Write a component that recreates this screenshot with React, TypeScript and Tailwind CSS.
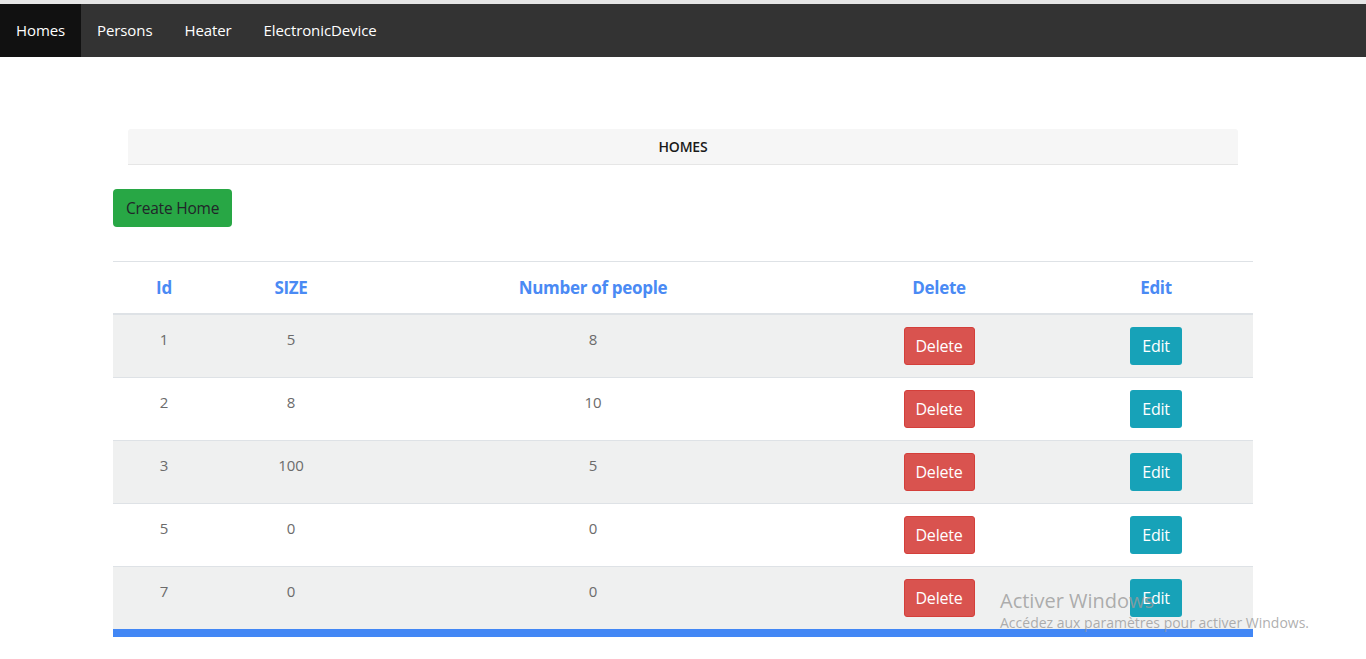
import React from 'react';

const homes = [
  { id: 1, size: 5, people: 8 },
  { id: 2, size: 8, people: 10 },
  { id: 3, size: 100, people: 5 },
  { id: 5, size: 0, people: 0 },
  { id: 7, size: 0, people: 0 },
];

const navItems = ['Homes', 'Persons', 'Heater', 'ElectronicDevice'];

export default function App() {
  return (
    <div className="relative min-h-[659px] bg-white font-['Open_Sans','Noto_Sans',sans-serif] text-[#212529]">
      <div className="h-[4px] bg-[#e6e6e6]" />
      <nav className="flex h-[53px] bg-[#333333]">
        {navItems.map((item, i) => (
          <a
            key={item}
            className={`flex items-center px-4 text-[15px] tracking-[-0.1px] text-white ${i === 0 ? 'bg-[#111111]' : ''}`}
          >
            {item}
          </a>
        ))}
      </nav>

      <main className="mx-[113px] pt-[72px]">
        <div className="mx-[15px] flex h-[36px] items-center justify-center rounded-t-[3px] border-b border-[#e6e6e6] bg-[#f6f6f6] text-[14px] font-semibold tracking-[-0.2px] text-[#1a1a1a]">
          HOMES
        </div>

        <button className="mt-[24px] h-[38px] rounded-[4px] bg-[#28a745] px-[13px] pt-[2px] text-[15.5px] tracking-[-0.2px] text-[#212529]">
          Create Home
        </button>

        <table className="mt-[34px] w-full table-fixed border-collapse border-t border-[#dee2e6]">
          <colgroup>
            <col className="w-[102px]" />
            <col className="w-[152px]" />
            <col className="w-[452px]" />
            <col className="w-[240px]" />
            <col className="w-[194px]" />
          </colgroup>
          <thead>
            <tr className="border-b-2 border-[#dee2e6] text-[17px] font-bold tracking-[-0.3px] text-[#4a8af4]">
              <th className="h-[52px] text-center align-middle">Id</th>
              <th className="text-center align-middle">SIZE</th>
              <th className="text-center align-middle">Number of people</th>
              <th className="text-center align-middle">Delete</th>
              <th className="text-center align-middle">Edit</th>
            </tr>
          </thead>
          <tbody>
            {homes.map((h, i) => (
              <tr
                key={h.id}
                className={`text-[15px] text-[#6b6b6b] ${i < homes.length - 1 ? 'border-b border-[#dee2e6]' : ''} ${i % 2 === 0 ? 'bg-[#eff0f0]' : 'bg-white'}`}
              >
                <td className="pt-[13px] text-center align-top">{h.id}</td>
                <td className="pt-[13px] text-center align-top">{h.size}</td>
                <td className="pt-[13px] text-center align-top">{h.people}</td>
                <td className="py-[12px] text-center align-top">
                  <button className="h-[38px] w-[71px] rounded-[3px] border border-[#d43f3a] bg-[#d9534f] pt-[1px] text-[16px] tracking-[-0.2px] text-white">
                    Delete
                  </button>
                </td>
                <td className="py-[12px] text-center align-top">
                  <button className="h-[38px] w-[52px] rounded-[3px] bg-[#17a2b8] pt-[1px] text-[16px] tracking-[-0.2px] text-white">
                    Edit
                  </button>
                </td>
              </tr>
            ))}
          </tbody>
        </table>
        <div className="h-[8px] bg-[#4287f5]" />
      </main>

      <div className="pointer-events-none absolute left-[1000px] top-[588px] text-[#9a9a9a]/80">
        <div className="text-[20px] leading-[26px]">Activer Windows</div>
        <div className="text-[14px] leading-[18px]">Accédez aux paramètres pour activer Windows.</div>
      </div>
    </div>
  );
}
